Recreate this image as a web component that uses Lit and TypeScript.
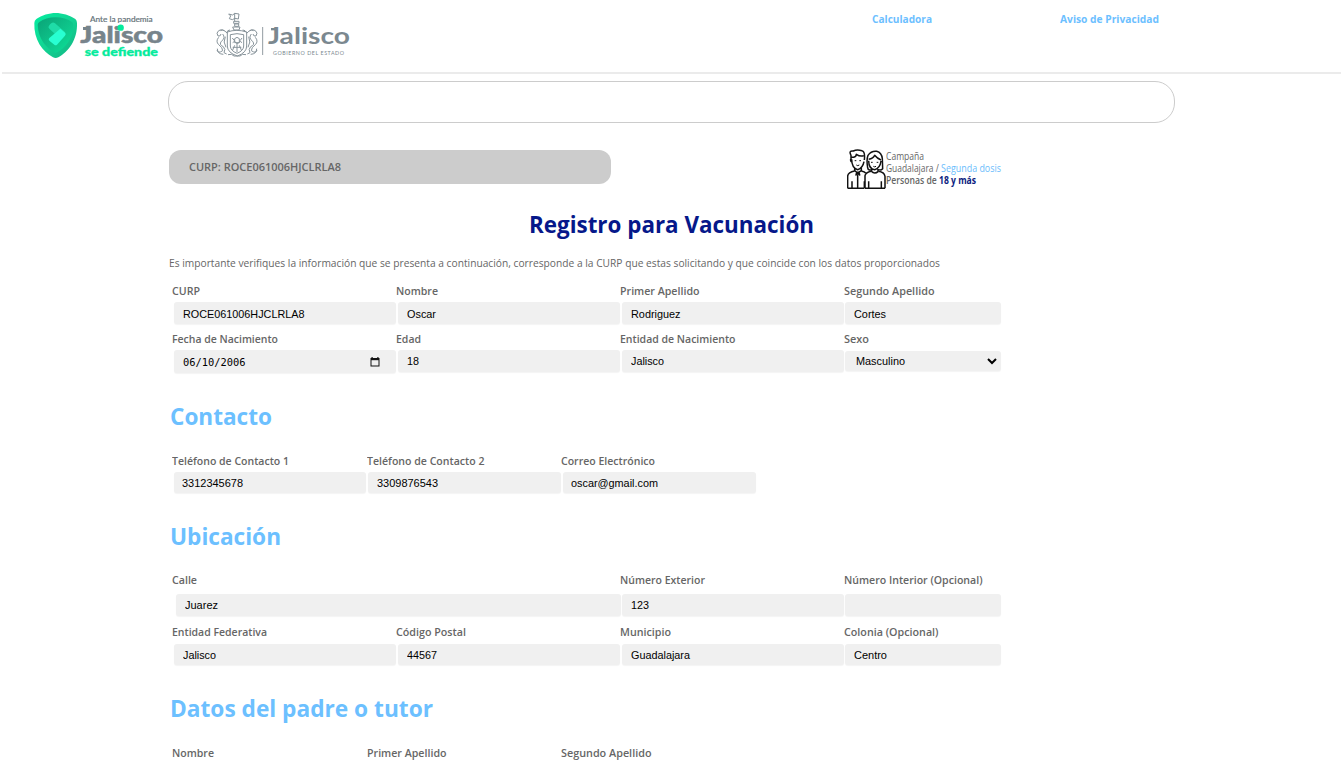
import { LitElement, html, css, svg, nothing } from "lit";
import { customElement, property } from "lit/decorators.js";

/** A single line of text condensed (or widened) to a given width. */
@customElement("fit-text")
class FitText extends LitElement {
  @property({ type: Number }) w = 0;
  static styles = css`
    :host { display: inline-block; white-space: pre; text-align: left; vertical-align: top; }
    span { display: inline-block; transform-origin: 0 50%; }
  `;
  render() {
    return html`<span><slot></slot></span>`;
  }
  firstUpdated() {
    const inner = this.renderRoot.querySelector("span")!;
    const natural = inner.getBoundingClientRect().width;
    if (!this.w || !natural) return;
    this.style.width = `${this.w}px`;
    inner.style.transform = `scaleX(${this.w / natural})`;
  }
}

interface Field {
  label: string;
  lw: number;
  value?: string;
  vw?: number;
  kind?: "date" | "select" | "wide" | "last";
}

const calendar = svg`<svg class="cal" width="10" height="10" viewBox="0 0 10 10">
  <path fill="#111" d="M1.5 0h1.2v1h4.6v-1h1.2v1h1v8.5h-9v-8.5h1z"/><rect x="1.5" y="3.2" width="7" height="5.3" fill="#f0f0f0"/></svg>`;
const chevron = svg`<svg class="chev" width="10" height="7" viewBox="0 0 10 7">
  <path d="M1 1l4 4 4-4" fill="none" stroke="#000" stroke-width="2"/></svg>`;

@customElement("app-root")
class AppRoot extends LitElement {
  static styles = css`
    :host { display: block; height: 760px; overflow: hidden; background: #fff; color: #666;
      font-family: "Open Sans", "Noto Sans", sans-serif; font-size: 11px; }
    * { box-sizing: border-box; }
    header { display: flex; height: 74px; margin: 0 2px; border-bottom: 2px solid #ebebeb; }
    .shield { display: block; margin: 12px 0 0 31px; }
    .state { display: block; margin: 12px 0 0 50px; }
    nav { display: flex; margin-left: 521px; padding-top: 11px; color: #6cc0ff; font-weight: 700; gap: 128px; line-height: 15px; }
    main { margin-left: 168px; width: 1007px; }
    .banner { margin-top: 7px; height: 42px; border: 1px solid #ccc; border-radius: 20px; }
    .info { display: flex; height: 40px; margin-top: 26px; }
    .curp { margin: 1px 0 0 1px; width: 442px; height: 34px; border-radius: 12px; background: #ccc; padding-left: 20px;
      line-height: 34px; font-weight: 650; }
    .people { display: block; margin-left: 236px; }
    .campaign { display: flex; flex-direction: column; font-size: 10px; line-height: 12px; padding-top: 1px; margin-left: -2px; }
    .campaign .a { color: #6cbdfc; }
    .campaign .b { font-weight: 650; }
    .campaign .n { color: #0c1c80; font-weight: 700; }
    h1 { margin: 20px 0 0; text-align: center; color: #06188a; font-size: 24px; line-height: 30px; font-weight: 700; }
    p { margin: 15px 0 0 1px; line-height: 18px; }
    h2 { margin: -1px 0 0 2px; height: 31px; line-height: 30px; font-size: 24px; font-weight: 700; color: #6cc0ff; }
    .row { display: grid; margin-left: 4px; }
    .four { grid-template-columns: 224px 224px 224px 157px; }
    .three { grid-template-columns: repeat(3, 194.7px); }
    .street { grid-template-columns: 448px 224px 157px; }
    .label { height: 16px; line-height: 16px; font-weight: 650; }
    .box { display: flex; align-items: center; height: 22px; margin: 3px 0 0 2px; padding: 0 9px; border-radius: 3px;
      background: #f0f0f0; box-shadow: 0 1px 1px #f4f4f4; color: #000; font-family: "Liberation Sans", Arial, sans-serif; }
    .g1 .box { padding-top: 2px; }
    .three .box { height: 21px; margin-left: 1.5px; margin-right: .5px; padding-left: 8.5px; }
    .box.date { height: 23px; font-family: "DejaVu Sans Mono", monospace; font-size: 10px; justify-content: space-between; padding: 1px 16px 0 9px; }
    .box.select { height: 20px; margin: 4px 0 0 1px; justify-content: space-between; padding: 0 4px 0 11px; }
    .last { margin-left: 1px; }
    .wide { margin-left: 4px; margin-right: -1px; }
    .street .box { margin-top: 6px; height: 22px; }
    .post .box { margin-top: 4px; height: 21px; }
    .g1 { margin-top: 11px; height: 48px; }
    .g2 { height: 71px; }
    .g3 { margin-top: 21px; height: 69px; }
    .g4 { margin-top: 20px; height: 52px; }
    .g5 { height: 70px; }
    .g6 { margin-top: 21px; height: 20px; }
  `;

  field(f: Field) {
    return html`<div>
      <div class="label"><fit-text w=${f.lw}>${f.label}</fit-text></div>
      ${f.value === undefined ? nothing : html`<div class="box ${f.kind ?? ""}">
        <fit-text w=${f.vw ?? 0}>${f.value}</fit-text>
        ${f.kind === "date" ? calendar : f.kind === "select" ? chevron : nothing}
      </div>`}
    </div>`;
  }

  row(cls: string, fields: Field[]) {
    return html`<div class="row ${cls}">${fields.map((f) => this.field(f))}</div>`;
  }

  render() {
    return html`
      <header>
        <svg class="shield" width="132" height="48" viewBox="39 36 396 144" font-family="Lato, sans-serif">
          <defs>
            <linearGradient id="g" x1="0" y1="0" x2="1" y2="1"><stop offset="0" stop-color="#04eda0"/><stop offset=".5" stop-color="#12d493"/><stop offset="1" stop-color="#12b382"/></linearGradient>
            <linearGradient id="k" x1="0" y1="0" x2="1" y2="1"><stop offset="0" stop-color="#0aa377"/><stop offset=".6" stop-color="#0ec88c"/><stop offset="1" stop-color="#08e69a"/></linearGradient>
          </defs>
          <path fill="url(#g)" d="M107 39C126 39 150 46 166 57Q171 61 171 69C173 119 145 156 115 172Q107 176 99 172C67 154 41 119 43 69Q43 61 49 57C65 46 88 39 107 39Z"/>
          <path fill="url(#k)" d="M107 52C126 52 144 58 156 66Q160 69 160 75C159 116 137 144 107 159C77 144 55 116 53 75Q53 69 58 66C70 57 88 52 107 52Z"/>
          <path fill="#1fdca8" d="M91 72Q98 64 105 70L135 96Q139 100 135 105L122 118 88 86Q83 82 87 77Z"/>
          <path fill="#28ffd2" d="M121 86L135 98Q139 102 135 107L111 134Q107 138 103 134L88 122Q84 118 88 114Z"/>
          <text x="210" y="66" font-size="20" font-weight="400" fill="#66737a" stroke="#66737a" stroke-width=".5" textLength="188" lengthAdjust="spacingAndGlyphs">Ante la pandemia</text>
          <text x="181" y="129" font-size="66" font-weight="900" fill="#77848b" stroke="#77848b" stroke-width="1.5" textLength="248" lengthAdjust="spacingAndGlyphs">Jalisco</text>
          <path d="M189 81h18v9h-18z" fill="#77848b"/>
          <circle cx="302" cy="83" r="9.5" fill="#04eb9c"/>
          <text x="194" y="167" font-size="34" font-weight="900" fill="#04eb9c" stroke="#04eb9c" textLength="220" lengthAdjust="spacingAndGlyphs">se defiende</text>
        </svg>
        <svg class="state" width="136" height="48" viewBox="45 36 408 144" font-family="Lato, sans-serif">
          <g fill="none" stroke="#87939a" stroke-width="3" stroke-linejoin="round">
            <path d="M86 42l12 3 6-5 13 2-2 15-10-2-8 4-9-3 4-8zM104 40v24M101 64h16v6h-16zM104 72h12v7h-12zM98 81h22l-3 9h-15z"/>
            <path d="M82 96q28-10 58 0v42q0 20-28 30-30-10-30-30z"/>
            <path d="M91 104q20-6 40 0v34q0 14-20 22-20-8-20-22z"/>
            <path d="M104 116q7-8 14 0v12h-14zM98 128q6-8 10 0t8 0 10 0M104 136l-6 14M118 136l6 14M111 130v26M98 142h26M97 114l6 8M126 114l-6 8"/>
            <path d="M82 100q-14-16-26-8-9 7-2 16 8 2 9-6M56 112q-10 12 0 22 12 8 12 18-14 10-17-2M68 102q10 12-4 22-8 10 6 16 8 8 2 18l8 4M52 146q0 16 18 17M73 92q-6-4-12 0M76 110q-8 16 2 32"/>
            <path d="M140 100q14-16 26-8 9 7 2 16-8 2-9-6M166 112q10 12 0 22-12 8-12 18 14 10 17-2M154 102q-10 12 4 22 8 10-6 16-8 8-2 18l-8 4M170 146q0 16-18 17M149 92q6-4 12 0M146 110q8 16-2 32"/>
            <path d="M90 90q-8 0-10 8M128 90q8 0 12 8M84 164q12-4 18 4h18q6-8 18-4"/>
          </g>
          <path d="M188 81v84" stroke="#929ca2" stroke-width="3"/>
          <text x="204" y="133" font-size="68" font-weight="700" fill="#7b888f" textLength="246" lengthAdjust="spacingAndGlyphs">Jalisco</text>
          <path d="M213 84h18v7h-18z" fill="#7b888f"/>
          <text x="219" y="164" font-size="16" font-weight="400" fill="#7b888f" textLength="213" lengthAdjust="spacing">GOBIERNO DEL ESTADO</text>
        </svg>
        <nav><fit-text w="60">Calculadora</fit-text><fit-text w="99">Aviso de Privacidad</fit-text></nav>
      </header>
      <main>
        <div class="banner"></div>
        <div class="info">
          <div class="curp"><fit-text w="152">CURP: ROCE061006HJCLRLA8</fit-text></div>
          <svg class="people" width="41" height="40" viewBox="21 27 123 120" fill="none" stroke="#111" stroke-width="4.5" stroke-linejoin="round">
            <path d="M33 60V46Q25 31 40 33 50 28 66 32 76 34 73 60M33 52h8q8-2 8-9 12 8 22 4M35 58q0 26 18 31 15-4 19-24M33 56q-4 6 4 12M44 84v9M64 82v11M44 92l9 7 11-7M50 97h7l2 8-5-4-6 4z"/>
            <path d="M23 145v-36q0-12 21-16M64 93q10 2 13 6M23 145h50M36 124v20M53 104v40M73 124v20"/>
            <path d="M83 84q-4-24 1-38 10-14 26-12 15 4 17 22l1 30q-5 6-12 3M86 58q14-2 18-12 8 10 19 14M86 62q0 24 18 27 16-4 19-26M83 84q2 8 11 5M95 87v7M114 87v7M94 94q10 10 21 0"/>
            <path d="M75 145v-38q2-10 19-13M115 94q18 2 20 15v36M75 145h60M86 124v20M124 124v20"/>
            <path d="M44 62h5M58 62h5M93 67h5M110 67h5M49 75q4 4 9 0M100 79q4 3 8 0" stroke-width="3"/>
          </svg>
          <div class="campaign">
            <fit-text w="38">Campaña</fit-text>
            <div><fit-text w="55">Guadalajara / </fit-text><fit-text class="a" w="60">Segunda dosis</fit-text></div>
            <div><fit-text class="b" w="53">Personas de </fit-text><fit-text class="n" w="37">18 y más</fit-text></div>
          </div>
        </div>
        <h1><fit-text w="285">Registro para Vacunación</fit-text></h1>
        <p><fit-text w="771">Es importante verifiques la información que se presenta a continuación, corresponde a la CURP que estas solicitando y que coincide con los datos proporcionados</fit-text></p>
        ${this.row("four g1", [
          { label: "CURP", lw: 28, value: "ROCE061006HJCLRLA8", vw: 121.5 },
          { label: "Nombre", lw: 42, value: "Oscar", vw: 29 },
          { label: "Primer Apellido", lw: 79.5, value: "Rodriguez", vw: 49.5 },
          { label: "Segundo Apellido", lw: 90.5, value: "Cortes", vw: 32, kind: "last" },
        ])}
        ${this.row("four g2", [
          { label: "Fecha de Nacimiento", lw: 106, value: "06/10/2006", vw: 62.5, kind: "date" },
          { label: "Edad", lw: 25, value: "18", vw: 12 },
          { label: "Entidad de Nacimiento", lw: 115.5, value: "Jalisco", vw: 33 },
          { label: "Sexo", lw: 25, value: "Masculino", vw: 49, kind: "select" },
        ])}
        <h2><fit-text w="102">Contacto</fit-text></h2>
        ${this.row("three g3", [
          { label: "Teléfono de Contacto 1", lw: 117, value: "3312345678", vw: 61 },
          { label: "Teléfono de Contacto 2", lw: 117.5, value: "3309876543", vw: 61 },
          { label: "Correo Electrónico", lw: 94, value: "oscar@gmail.com", vw: 87 },
        ])}
        <h2><fit-text w="111">Ubicación</fit-text></h2>
        ${this.row("street g4", [
          { label: "Calle", lw: 25, value: "Juarez", vw: 33, kind: "wide" },
          { label: "Número Exterior", lw: 85, value: "123", vw: 18 },
          { label: "Número Interior (Opcional)", lw: 138.5, value: "", kind: "last" },
        ])}
        ${this.row("four post g5", [
          { label: "Entidad Federativa", lw: 95, value: "Jalisco", vw: 33 },
          { label: "Código Postal", lw: 70, value: "44567", vw: 30 },
          { label: "Municipio", lw: 51, value: "Guadalajara", vw: 59 },
          { label: "Colonia (Opcional)", lw: 94.5, value: "Centro", vw: 33, kind: "last" },
        ])}
        <h2><fit-text w="263">Datos del padre o tutor</fit-text></h2>
        ${this.row("three g6", [
          { label: "Nombre", lw: 42 },
          { label: "Primer Apellido", lw: 79.5 },
          { label: "Segundo Apellido", lw: 90.5 },
        ])}
      </main>
    `;
  }
}
